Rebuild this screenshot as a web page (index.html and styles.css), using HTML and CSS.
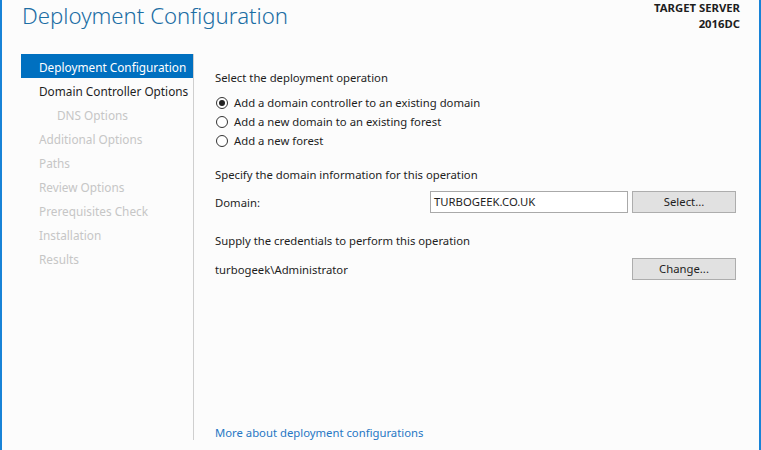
FILE: index.html
```html
<!DOCTYPE html>
<html lang="en">
<head>
  <meta charset="UTF-8" />
  <title>Deployment Configuration</title>
  <link rel="stylesheet" href="styles.css">
</head>
<body>
<div class="window">
  <div class="header">
    <h1>Deployment Configuration</h1>
    <div class="target">TARGET SERVER<br />2016DC</div>
  </div>

  <div class="main">
    <!-- wizard steps -->
    <ul class="steps">
      <li class="active">Deployment Configuration</li>
      <li class="enabled">Domain Controller Options</li>
      <li class="sub">DNS Options</li>
      <li>Additional Options</li>
      <li>Paths</li>
      <li>Review Options</li>
      <li>Prerequisites Check</li>
      <li>Installation</li>
      <li>Results</li>
    </ul>

    <div class="page">
      <div class="label">Select the deployment operation</div>
      <div class="radios">
        <label class="radio"><span class="dot checked"></span>Add a domain controller to an existing domain</label>
        <label class="radio"><span class="dot"></span>Add a new domain to an existing forest</label>
        <label class="radio"><span class="dot"></span>Add a new forest</label>
      </div>

      <div class="label section">Specify the domain information for this operation</div>
      <div class="row">
        <span class="field-name">Domain:</span>
        <span class="textbox">TURBOGEEK.CO.UK</span>
        <span class="button">Select...</span>
      </div>

      <div class="label section creds">Supply the credentials to perform this operation</div>
      <div class="row cred">
        <span class="field-name">turbogeek\Administrator</span>
        <span class="button">Change...</span>
      </div>

      <a class="more" href="#">More about deployment configurations</a>
    </div>
  </div>
</div>
</body>
</html>
```

FILE: styles.css
```css
body {
  margin: 0;
  background: #fcfcfc;
  font-family: 'Noto Sans', 'Open Sans', sans-serif;
  font-size: 11.3px;
  color: #1e1e1e;
}

.window {
  height: 450px;
  border-left: 2px solid #1883d7;
  border-right: 2px solid #1883d7;
  box-sizing: border-box;
  display: flex;
  flex-direction: column;
  overflow: hidden;
}

.header {
  display: flex;
  justify-content: space-between;
  align-items: flex-start;
  padding: 0 19px 0 20px;
  height: 54px;
}

h1 {
  margin: 0;
  font-size: 22.2px;
  font-weight: 300;
  color: #1c6ea4;
  line-height: 32px;
}

.target {
  text-align: right;
  font-weight: 700;
  font-size: 11.3px;
  line-height: 16px;
  margin-top: 0;
  color: #1e1e1e;
}

.main {
  flex: 1;
  display: flex;
  padding-bottom: 10px;
}

.steps {
  list-style: none;
  margin: 0 0 0 19px;
  padding: 0;
  width: 172px;
  border-right: 1px solid #cfcfcf;
}

.steps li {
  height: 24px;
  line-height: 26px;
  padding-left: 18px;
  color: #c6c6c6;
  white-space: nowrap;
  font-size: 11.8px;
}

.steps li.active {
  background: #0070c0;
  color: #ffffff;
}

.steps li.enabled {
  color: #1e1e1e;
}

.steps li.sub {
  padding-left: 36px;
}

.page {
  flex: 1;
  padding: 15px 23px 0 21px;
  display: flex;
  flex-direction: column;
  position: relative;
}

.label {
  line-height: 18px;
}

.section {
  margin-top: 16px;
}

.section.creds {
  margin-top: 19px;
}

.radios {
  margin-top: 6px;
  display: flex;
  flex-direction: column;
}

.radio {
  display: flex;
  align-items: center;
  height: 19px;
}

.dot {
  width: 12px;
  height: 12px;
  border: 1px solid #333;
  border-radius: 50%;
  margin: 0 6px 0 1px;
  box-sizing: border-box;
  background: #fff;
  position: relative;
}

.dot.checked::after {
  content: "";
  position: absolute;
  left: 2px;
  top: 2px;
  width: 6px;
  height: 6px;
  border-radius: 50%;
  background: #222;
}

.row {
  display: flex;
  align-items: center;
  margin-top: 7px;
  height: 22px;
}

.field-name {
  flex: 1;
}

.textbox {
  width: 198px;
  height: 22px;
  border: 1px solid #a9a9a9;
  background: #fff;
  box-sizing: border-box;
  line-height: 20px;
  padding-left: 3px;
  margin-right: 4px;
}

.button {
  width: 104px;
  height: 22px;
  box-sizing: border-box;
  border: 1px solid #adadad;
  background: #e1e1e1;
  text-align: center;
  line-height: 20px;
}

.row.cred {
  margin-top: 8px;
}

.more {
  position: absolute;
  left: 21px;
  bottom: -2px;
  color: #2677c4;
  text-decoration: none;
  line-height: 18px;
}
```
